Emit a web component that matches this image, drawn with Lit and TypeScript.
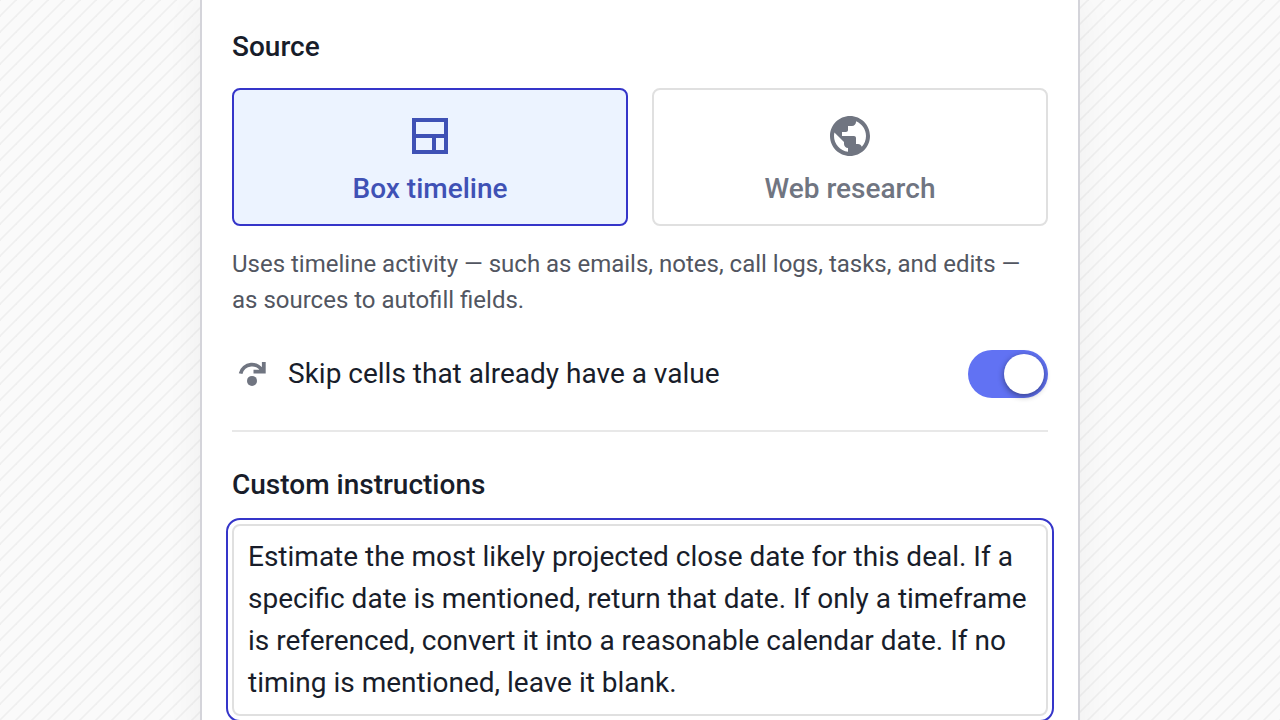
import { LitElement, html, css, svg } from "lit";
import { customElement, state } from "lit/decorators.js";

type Source = "timeline" | "web";

const timelineIcon = svg`<path fill="none" stroke="currentColor" stroke-width="4" d="M8 8h32v32H8zM8 24h32M28 24v16" />`;
const globeIcon = svg`<path transform="scale(2)" fill="currentColor" d="M12 2C6.48 2 2 6.48 2 12s4.48 10 10 10 10-4.48 10-10S17.52 2 12 2zm-1 17.93c-3.95-.49-7-3.85-7-7.93 0-.62.08-1.21.21-1.79L9 15v1c0 1.1.9 2 2 2v1.93zm6.9-2.54c-.26-.81-1-1.39-1.9-1.39h-1v-3c0-.55-.45-1-1-1H8v-2h2c.55 0 1-.45 1-1V7h2c1.1 0 2-.9 2-2v-.41c2.93 1.19 5 4.06 5 7.41 0 2.08-.8 3.97-2.1 5.39z" />`;

@customElement("app-root")
export class AppRoot extends LitElement {
  static styles = css`
    :host {
      display: block;
      box-sizing: border-box;
      height: 100vh;
      overflow: hidden;
      background-color: #fafafa;
      background-image: linear-gradient(
        135deg,
        #efefef 0%,
        #efefef 3%,
        #fafafa 6%,
        #fafafa 45%,
        #efefef 48%,
        #efefef 52%,
        #fafafa 55%,
        #fafafa 95%,
        #efefef 98%,
        #efefef 100%
      );
      background-size: 16px 16px;
      font-family: Roboto, "Liberation Sans", sans-serif;
      font-size: 28px;
      line-height: 42px;
      color: #181d2a;
    }
    .panel {
      box-sizing: border-box;
      max-width: 880px;
      min-height: 100%;
      margin: 0 auto;
      padding: 26px 30px 32px;
      border: solid #d4d4da;
      border-width: 0 2px;
      background: #fff;
      box-shadow: 0 0 36px rgba(0, 0, 0, 0.05);
    }
    .title {
      display: block;
      margin: 0;
      font-size: 28px;
      font-weight: 500;
      line-height: 42px;
    }
    .sources {
      display: grid;
      grid-template-columns: 1fr 1fr;
      gap: 24px;
      margin: 20px 0;
    }
    .card {
      position: relative;
      display: flex;
      flex-direction: column;
      align-items: center;
      gap: 8px;
      padding: 22px 16px 14px;
      border: 2px solid #e0e0e0;
      border-radius: 8px;
      color: #707581;
      font-weight: 500;
      cursor: pointer;
    }
    .card:has(.radio:checked) {
      border-color: #3535c9;
      background: #ecf3ff;
      color: #3f51b5;
    }
    .radio {
      position: absolute;
      inset: 0;
      margin: 0;
      appearance: none;
      cursor: pointer;
    }
    .icon {
      display: block;
      width: 48px;
      height: 48px;
    }
    .note {
      margin: 0;
      font-size: 24px;
      line-height: 36px;
      color: #525661;
    }
    .option {
      display: flex;
      align-items: center;
      gap: 16px;
      margin-top: 32px;
      padding-bottom: 32px;
      border-bottom: 2px solid #e8e8e8;
    }
    .skip {
      width: 40px;
      height: 40px;
      color: #707581;
    }
    .option-label {
      flex: 1;
    }
    .switch {
      box-sizing: border-box;
      display: block;
      width: 80px;
      height: 48px;
      margin: 0;
      padding: 4px;
      appearance: none;
      border-radius: 24px;
      background: #b4b7c0;
      cursor: pointer;
    }
    .switch::before {
      content: "";
      display: block;
      width: 40px;
      height: 40px;
      border-radius: 50%;
      background: #fff;
      box-shadow: 0 2px 6px rgba(0, 0, 0, 0.45);
    }
    .switch:checked {
      background: #6172f3;
    }
    .switch:checked::before {
      margin-left: auto;
    }
    .instructions {
      margin-top: 32px;
    }
    .text {
      box-sizing: border-box;
      display: block;
      width: 100%;
      margin: 18px 0 0;
      padding: 10px 14px;
      border: 2px solid #e0e0e0;
      border-radius: 8px;
      outline: 2px solid #3535c9;
      outline-offset: 4px;
      background: #fff;
      color: inherit;
      font: inherit;
      resize: none;
      overflow: hidden;
    }
  `;

  @state() private source: Source = "timeline";

  private card(value: Source, label: string, icon: unknown) {
    return html`
      <label class="card">
        <input
          class="radio"
          type="radio"
          name="source"
          .checked=${this.source === value}
          @change=${() => (this.source = value)}
        />
        <svg class="icon" viewBox="0 0 48 48" aria-hidden="true">${icon}</svg>
        <span>${label}</span>
      </label>
    `;
  }

  render() {
    return html`
      <main class="panel">
        <h2 class="title" id="source-title">Source</h2>
        <div class="sources" role="radiogroup" aria-labelledby="source-title">
          ${this.card("timeline", "Box timeline", timelineIcon)}
          ${this.card("web", "Web research", globeIcon)}
        </div>
        <p class="note">
          Uses timeline activity — such as emails, notes, call logs, tasks, and edits — as sources to autofill fields.
        </p>
        <div class="option">
          <svg class="skip" viewBox="0 0 40 40" aria-hidden="true">
            <path
              fill="none"
              stroke="currentColor"
              stroke-width="3.8"
              d="M8.6 19.6A11.8 11.8 0 0 1 30.8 17.6M31.8 8v11.6M33.7 17.7H21.5"
            />
            <circle cx="20" cy="26.9" r="5" fill="currentColor" />
          </svg>
          <label class="option-label" for="skip">Skip cells that already have a value</label>
          <input class="switch" id="skip" type="checkbox" role="switch" checked />
        </div>
        <section class="instructions">
          <label class="title" for="instructions">Custom instructions</label>
          <textarea
            class="text"
            id="instructions"
            rows="4"
            .value=${"Estimate the most likely projected close date for this deal. If a specific date is mentioned, return that date. If only a timeframe is referenced, convert it into a reasonable calendar date. If no timing is mentioned, leave it blank."}
          ></textarea>
        </section>
      </main>
    `;
  }
}
